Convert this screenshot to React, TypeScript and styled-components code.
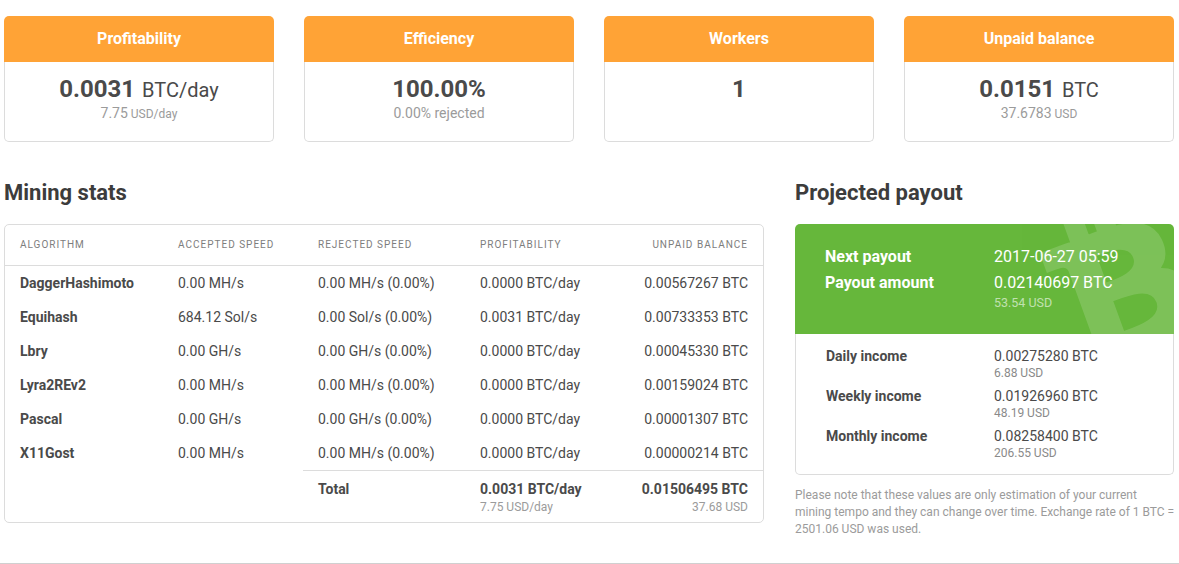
import React from "react";
import styled, { createGlobalStyle } from "styled-components";
import { FaBtc } from "react-icons/fa";

const GlobalStyle = createGlobalStyle`
  html, body {
    margin: 0;
    padding: 0;
    background: #fff;
    color: #4a4a4a;
    font-family: Roboto, "Liberation Sans", sans-serif;
    overflow: hidden;
  }
`;

// ====================== Layout ======================
const Page = styled.div`
  width: 1179px;
  height: 564px;
  box-sizing: border-box;
  padding: 16px 5px 0 4px;
  border-bottom: 1px solid #d0d0d0;
`;

const CardRow = styled.div`
  display: grid;
  grid-template-columns: repeat(4, 270px);
  gap: 30px;
`;

const Columns = styled.div`
  display: grid;
  grid-template-columns: 760px 379px;
  gap: 31px;
  margin-top: 36px;
`;

const SectionTitle = styled.h2`
  margin: 0 0 16px;
  height: 30px;
  font-size: 22px;
  line-height: 30px;
  font-weight: 700;
  color: #3c3c3c;
`;

// ====================== Stat cards ======================
const CardHeader = styled.div`
  height: 46px;
  border-radius: 5px 5px 0 0;
  background: #ffa336;
  color: #fff;
  font-size: 16px;
  font-weight: 700;
  line-height: 45px;
  text-align: center;
`;

const CardBody = styled.div`
  height: 80px;
  box-sizing: border-box;
  padding-top: 12px;
  border: 1px solid #dcdcdc;
  border-top: 0;
  border-radius: 0 0 5px 5px;
  text-align: center;
`;

const CardValue = styled.div`
  height: 30px;
  font-size: 20px;
  line-height: 30px;
  color: #4a4a4a;
`;

const CardStrong = styled.strong`
  font-size: 24px;
  font-weight: 700;
`;

const CardUnit = styled.span`
  margin-left: 7px;
`;

const CardNote = styled.div`
  font-size: 14px;
  line-height: 20px;
  color: #9b9b9b;
  margin-top: -1px;
`;

const Small = styled.span`
  font-size: 12px;
`;

// ====================== Stats table ======================
const Panel = styled.div`
  border: 1px solid #dcdcdc;
  border-radius: 5px;
  height: 299px;
  box-sizing: border-box;
  overflow: hidden;
`;

const Table = styled.table`
  width: 100%;
  border-collapse: collapse;
  table-layout: fixed;
  font-size: 14px;
`;

const Th = styled.th<{ $right?: boolean }>`
  height: 40px;
  padding: 0 15px;
  box-sizing: border-box;
  border-bottom: 1px solid #dcdcdc;
  font-size: 10px;
  font-weight: 400;
  letter-spacing: 1px;
  color: #7d7d7d;
  text-align: ${(p) => (p.$right ? "right" : "left")};
`;

const Td = styled.td<{ $right?: boolean; $bold?: boolean }>`
  height: 34px;
  padding: 0 15px;
  font-weight: ${(p) => (p.$bold ? 700 : 400)};
  text-align: ${(p) => (p.$right ? "right" : "left")};
  color: #4a4a4a;
  white-space: nowrap;
`;

const TotalCell = styled.td<{ $right?: boolean }>`
  padding: 10px 15px 0;
  border-top: 1px solid #dcdcdc;
  vertical-align: top;
  font-weight: 700;
  line-height: 17px;
  text-align: ${(p) => (p.$right ? "right" : "left")};
  color: #4a4a4a;
  white-space: nowrap;
`;

const TotalNote = styled.div`
  font-size: 12px;
  font-weight: 400;
  color: #9b9b9b;
  margin-top: 1px;
`;

// ====================== Payout ======================
const PayoutHero = styled.div`
  position: relative;
  height: 110px;
  box-sizing: border-box;
  padding: 20px 30px 0;
  border-radius: 5px 5px 0 0;
  background: #66b73b;
  color: #fff;
  overflow: hidden;
`;

const Watermark = styled(FaBtc)`
  position: absolute;
  right: -32px;
  top: -21px;
  width: 170px;
  height: 170px;
  transform: rotate(-20deg);
  color: #fff;
  opacity: 0.15;
  stroke-width: 12;
`;

const HeroRow = styled.div`
  position: relative;
  display: grid;
  grid-template-columns: 169px 1fr;
  line-height: 26px;
  font-size: 16px;
`;

const HeroLabel = styled.div`
  font-weight: 700;
  font-size: 16px;
  margin-right: -10px;
`;

const HeroNote = styled.div`
  font-size: 12.5px;
  line-height: 14px;
  color: rgba(255, 255, 255, 0.6);
`;

const IncomeList = styled.div`
  height: 141px;
  box-sizing: border-box;
  padding: 14px 30px 0;
  display: flex;
  flex-direction: column;
  gap: 9px;
  border: 1px solid #dcdcdc;
  border-top: 0;
  border-radius: 0 0 5px 5px;
`;

const IncomeRow = styled.div`
  display: grid;
  grid-template-columns: 168px 1fr;
  font-size: 14px;
  line-height: 17px;
`;

const IncomeLabel = styled.div`
  font-weight: 700;
`;

const IncomeNote = styled.div`
  font-size: 12px;
  line-height: 12px;
  margin-top: 2px;
  color: #8a8a8a;
`;

const Disclaimer = styled.p`
  margin: 12px -2px 0 0;
  font-size: 12px;
  line-height: 17px;
  color: #9b9b9b;
`;

// ====================== Data ======================
const cards = [
  { title: "Profitability", strong: "0.0031", unit: "BTC/day", note: "7.75", small: "USD/day" },
  { title: "Efficiency", strong: "100.00%", unit: "", note: "0.00% rejected", small: "" },
  { title: "Workers", strong: "1", unit: "", note: "", small: "" },
  { title: "Unpaid balance", strong: "0.0151", unit: "BTC", note: "37.6783", small: "USD" },
];

const rows = [
  ["DaggerHashimoto", "0.00 MH/s", "0.00 MH/s (0.00%)", "0.0000 BTC/day", "0.00567267 BTC"],
  ["Equihash", "684.12 Sol/s", "0.00 Sol/s (0.00%)", "0.0031 BTC/day", "0.00733353 BTC"],
  ["Lbry", "0.00 GH/s", "0.00 GH/s (0.00%)", "0.0000 BTC/day", "0.00045330 BTC"],
  ["Lyra2REv2", "0.00 MH/s", "0.00 MH/s (0.00%)", "0.0000 BTC/day", "0.00159024 BTC"],
  ["Pascal", "0.00 GH/s", "0.00 GH/s (0.00%)", "0.0000 BTC/day", "0.00001307 BTC"],
  ["X11Gost", "0.00 MH/s", "0.00 MH/s (0.00%)", "0.0000 BTC/day", "0.00000214 BTC"],
];

const income = [
  ["Daily income", "0.00275280 BTC", "6.88 USD"],
  ["Weekly income", "0.01926960 BTC", "48.19 USD"],
  ["Monthly income", "0.08258400 BTC", "206.55 USD"],
];

const App: React.FC = () => (
  <Page>
    <GlobalStyle />
    <CardRow>
      {cards.map((c) => (
        <div key={c.title}>
          <CardHeader>{c.title}</CardHeader>
          <CardBody>
            <CardValue>
              <CardStrong>{c.strong}</CardStrong>
              {c.unit && <CardUnit>{c.unit}</CardUnit>}
            </CardValue>
            <CardNote>
              {c.note}
              {c.small && <Small> {c.small}</Small>}
            </CardNote>
          </CardBody>
        </div>
      ))}
    </CardRow>

    <Columns>
      <section>
        <SectionTitle>Mining stats</SectionTitle>
        <Panel>
          <Table>
            <colgroup>
              <col style={{ width: 158 }} />
              <col style={{ width: 140 }} />
              <col style={{ width: 162 }} />
              <col style={{ width: 140 }} />
              <col />
            </colgroup>
            <thead>
              <tr>
                <Th>ALGORITHM</Th>
                <Th>ACCEPTED SPEED</Th>
                <Th>REJECTED SPEED</Th>
                <Th>PROFITABILITY</Th>
                <Th $right>UNPAID BALANCE</Th>
              </tr>
            </thead>
            <tbody>
              {rows.map((r) => (
                <tr key={r[0]}>
                  <Td $bold>{r[0]}</Td>
                  <Td>{r[1]}</Td>
                  <Td>{r[2]}</Td>
                  <Td>{r[3]}</Td>
                  <Td $right>{r[4]}</Td>
                </tr>
              ))}
              <tr>
                <td colSpan={2} />
                <TotalCell>Total</TotalCell>
                <TotalCell>
                  0.0031 BTC/day
                  <TotalNote>7.75 USD/day</TotalNote>
                </TotalCell>
                <TotalCell $right>
                  0.01506495 BTC
                  <TotalNote>37.68 USD</TotalNote>
                </TotalCell>
              </tr>
            </tbody>
          </Table>
        </Panel>
      </section>

      <section>
        <SectionTitle>Projected payout</SectionTitle>
        <PayoutHero>
          <Watermark />
          <HeroRow>
            <HeroLabel>Next payout</HeroLabel>
            <div>2017-06-27 05:59</div>
          </HeroRow>
          <HeroRow>
            <HeroLabel>Payout amount</HeroLabel>
            <div>
              0.02140697 BTC
              <HeroNote>53.54 USD</HeroNote>
            </div>
          </HeroRow>
        </PayoutHero>
        <IncomeList>
          {income.map((i) => (
            <IncomeRow key={i[0]}>
              <IncomeLabel>{i[0]}</IncomeLabel>
              <div>
                {i[1]}
                <IncomeNote>{i[2]}</IncomeNote>
              </div>
            </IncomeRow>
          ))}
        </IncomeList>
        <Disclaimer>
          Please note that these values are only estimation of your current
          mining tempo and they can change over time. Exchange rate of 1 BTC =
          2501.06 USD was used.
        </Disclaimer>
      </section>
    </Columns>
  </Page>
);

export default App;
